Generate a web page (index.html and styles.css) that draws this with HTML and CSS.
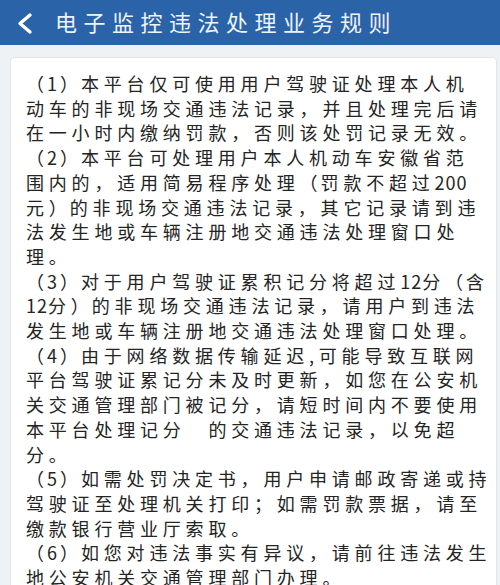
FILE: index.html
```html
<!DOCTYPE html>
<html lang="zh-CN">
<head>
  <meta charset="UTF-8">
  <title>电子监控违法处理业务规则</title>
  <meta name="viewport" content="width=device-width, initial-scale=1.0">
  <link rel="stylesheet" href="styles.css">
</head>
<body>

  <div class="topbar">
    <a class="back" href="#">
      <svg width="20" height="24" viewBox="0 0 20 24">
        <polyline points="15,4 5,12.5 15,21" fill="none" stroke="#fff" stroke-width="3.4" stroke-linecap="round" stroke-linejoin="round"/>
      </svg>
    </a>
    <h1>电子监控违法处理业务规则</h1>
  </div>

  <!-- 规则正文，括号用 .p、数字用 .d 收紧间距 -->
  <div class="rules">
    <p><span class="p">（1）</span>本平台仅可使用用户驾驶证处理本人机<br>动车的非现场交通违法记录，并且处理完后请<br>在一小时内缴纳罚款，否则该处罚记录无效。</p>
    <p><span class="p">（2）</span>本平台可处理用户本人机动车安徽省范<br>围内的，适用简易程序处理<span class="p">（</span>罚款不超过<span class="d">200</span><br>元<span class="p">）</span>的非现场交通违法记录，其它记录请到违<br>法发生地或车辆注册地交通违法处理窗口处<br>理。</p>
    <p><span class="p">（3）</span>对于用户驾驶证累积记分将超过<span class="d">12</span>分<span class="p">（</span>含<br><span class="d">12</span>分<span class="p">）</span>的非现场交通违法记录，请用户到违法<br>发生地或车辆注册地交通违法处理窗口处理。</p>
    <p><span class="p">（4）</span>由于网络数据传输延迟,可能导致互联网<br>平台驾驶证累记分未及时更新，如您在公安机<br>关交通管理部门被记分，请短时间内不要使用<br>本平台处理记分　的交通违法记录，以免超<br>分。</p>
    <p><span class="p">（5）</span>如需处罚决定书，用户申请邮政寄递或持<br>驾驶证至处理机关打印；如需罚款票据，请至<br>缴款银行营业厅索取。</p>
    <p><span class="p">（6）</span>如您对违法事实有异议，请前往违法发生<br>地公安机关交通管理部门办理。</p>
  </div>

</body>
</html>
```

FILE: styles.css
```css
html, body {
  height: 100%;
  overflow: hidden;
}

body {
  margin: 0;
  background: #eff2f4;
  font-family: "Noto Sans CJK SC", "Noto Sans", sans-serif;
  color: #242424;
}

.topbar {
  display: flex;
  align-items: center;
  height: 45px;
  background: #2a63a8;
  color: #eef3f9;
}

.back {
  display: flex;
  margin-left: 15px;
  margin-right: 20px;
}

.topbar h1 {
  margin: 0;
  font-size: 22px;
  font-weight: normal;
  letter-spacing: 6.5px;
  line-height: 1;
  padding-bottom: 3px;
}

.rules {
  margin: 12px 3px 0 10px;
  padding: 13px 10px 20px 15px;
  background: #fff;
  border: 1px solid #e2e5e8;
  border-radius: 4px;
  font-size: 18px;
  line-height: 24.7px;
  letter-spacing: 4.8px;
  white-space: nowrap;
}

.rules p {
  margin: 0;
}

/* 括号和数字字宽窄一些 */
.rules .p {
  letter-spacing: 3px;
}

.rules .d {
  letter-spacing: 1px;
}
```
